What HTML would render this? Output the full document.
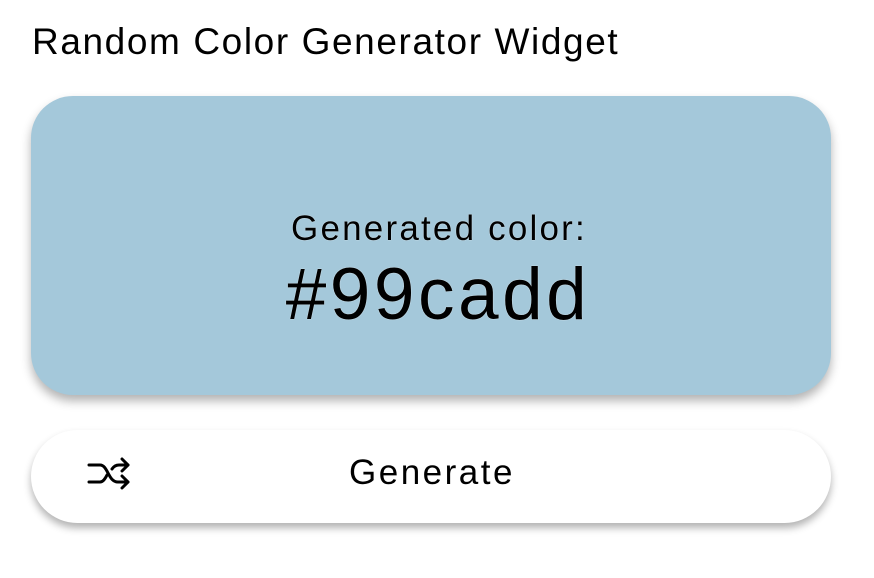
<!DOCTYPE html>
<html><head><style>
body{margin:0;width:874px;height:578px;background:#fff;font-family:"Liberation Sans",sans-serif;position:relative;overflow:hidden}
.t{position:absolute;left:32px;top:21px;font-size:37px;letter-spacing:1.6px;white-space:nowrap;color:#000}
.card{position:absolute;left:31px;top:96px;width:800px;height:299px;border-radius:42px;background:#a4c8da;box-shadow:0 6px 10px rgba(0,0,0,.3)}
.l1{position:absolute;left:0;right:0;top:209px;padding-left:4px;text-align:center;font-size:35px;letter-spacing:2.2px;text-shadow:0 0 1px #fff}
.l2{position:absolute;left:0;right:0;top:253px;padding-left:2px;text-align:center;font-size:73px;letter-spacing:3.5px;text-shadow:0 0 1px #fff}
.btn{position:absolute;left:31px;top:430px;width:800px;height:93px;border-radius:47px;background:#fff;box-shadow:0 5px 8px rgba(0,0,0,.3)}
.g{position:absolute;left:0;right:0;top:453px;padding-right:10px;text-align:center;font-size:35px;letter-spacing:2.5px}
svg{position:absolute;left:86px;top:456px}
</style></head><body>
<div class="t">Random Color Generator Widget</div>
<div class="card"></div>
<div class="l1">Generated color:</div>
<div class="l2">#99cadd</div>
<div class="btn"></div>
<div class="g">Generate</div>
<svg width="48" height="36" viewBox="0 0 48 36" fill="none" stroke="#000" stroke-width="3" stroke-linecap="round" stroke-linejoin="round">
<path d="M3 9H14C22 9 22 26 32 26H42"/>
<path d="M3 26H14C17 26 19 23 21 19"/>
<path d="M26 13C28 10 30 9 33 9H42"/>
<path d="M36 3L42 9L36 15"/>
<path d="M36 20L42 26L36 32"/>
</svg>
</body></html>
